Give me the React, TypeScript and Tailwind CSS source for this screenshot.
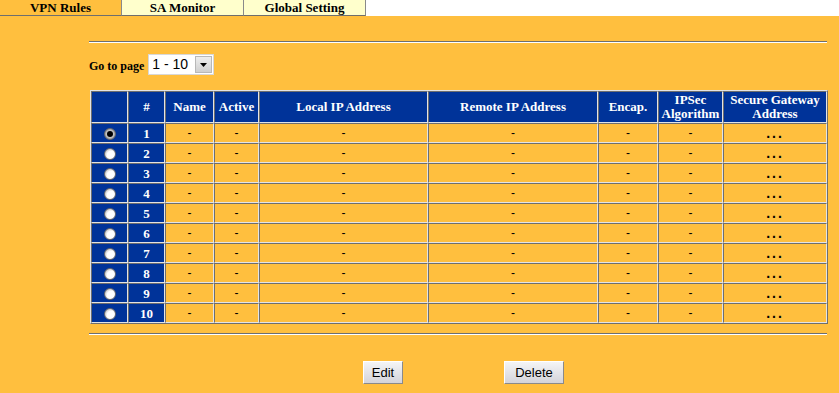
const tabs = [
  { label: "VPN Rules", active: true },
  { label: "SA Monitor", active: false },
  { label: "Global Setting", active: false },
];

const cols = [
  { key: "sel", label: "", w: 37 },
  { key: "num", label: "#", w: 37 },
  { key: "name", label: "Name", w: 49 },
  { key: "active", label: "Active", w: 45 },
  { key: "local", label: "Local IP Address", w: 169 },
  { key: "remote", label: "Remote IP Address", w: 170 },
  { key: "encap", label: "Encap.", w: 60 },
  { key: "ipsec", label: "IPSec Algorithm", w: 65 },
  { key: "gw", label: "Secure Gateway Address", w: 104 },
];

const rows = Array.from({ length: 10 }, (_, i) => i + 1);

function Radio({ checked }: { checked?: boolean }) {
  return (
    <span
      className={`inline-flex w-[12px] h-[12px] rounded-full items-center justify-center border border-[#6a6a6a] align-middle ${
        checked
          ? "bg-[radial-gradient(circle_at_50%_50%,#d0d0d0_40%,#7a7a7a_100%)]"
          : "bg-[radial-gradient(circle_at_60%_60%,#ffffff_45%,#9a9a9a_100%)]"
      }`}
    >
      {checked && <span className="w-[6px] h-[6px] rounded-full bg-black" />}
    </span>
  );
}

export default function App() {
  return (
    <div className="w-[839px] h-[393px] bg-[#ffbf3e] overflow-hidden font-['Liberation_Serif',serif] text-black">
      {/* tab strip */}
      <div className="flex h-[16px] bg-white">
        {tabs.map((t) => (
          <div
            key={t.label}
            className={`w-[122px] h-[16px] border-r border-[#8a8a8a] border-b border-b-[#6e6e6e] flex items-center justify-center text-[13px] font-bold leading-none ${
              t.active ? "bg-[#ffbf3e]" : "bg-[#ffffcc]"
            }`}
          >
            {t.label}
          </div>
        ))}
      </div>

      <div className="pl-[89px] w-[827px]">
        <div className="mt-[25px] h-[2px] border-t border-[#6e6e6e] border-b border-b-white" />

        <div className="flex items-center gap-[4px] mt-[11px] h-[21px]">
          <span className="text-[12px] font-bold pt-[3px]">Go to page</span>
          <div className="w-[66px] h-[21px] bg-white border border-[#d8d8d8] flex items-stretch">
            <span className="flex-1 pl-[3px] text-[14px] leading-[19px] font-['Liberation_Sans',sans-serif]">1 - 10</span>
            <span className="w-[17px] m-[1px] bg-[linear-gradient(#eeeeee,#cfcfcf)] border border-[#b8b8b8] flex items-center justify-center">
              <svg width="7" height="4" viewBox="0 0 7 4">
                <path d="M0 0h7L3.5 4z" fill="#000" />
              </svg>
            </span>
          </div>
        </div>

        <table className="mt-[15px] ml-[1px] w-[737px] table-fixed border-separate border-spacing-0 border border-t-[#e4e4e4] border-l-[#e4e4e4] border-r-[#6e6e6e] border-b-[#6e6e6e]">
          <colgroup>
            {cols.map((c) => (
              <col key={c.key} style={{ width: c.w }} />
            ))}
          </colgroup>
          <thead>
            <tr className="h-[32px]">
              {cols.map((c) => (
                <th
                  key={c.key}
                  className="bg-[#003399] text-white text-[13px] font-bold leading-[14px] text-center px-0 border border-t-[#6e6e6e] border-l-[#6e6e6e] border-r-[#e4e4e4] border-b-[#e4e4e4]"
                >
                  {c.label}
                </th>
              ))}
            </tr>
          </thead>
          <tbody>
            {rows.map((n) => (
              <tr key={n} className="h-[20px]">
                <td className="bg-[#003399] text-center border border-t-[#6e6e6e] border-l-[#6e6e6e] border-r-[#e4e4e4] border-b-[#e4e4e4] leading-none">
                  <Radio checked={n === 1} />
                </td>
                <td className="bg-[#003399] text-white text-[13px] font-bold text-center border border-t-[#6e6e6e] border-l-[#6e6e6e] border-r-[#e4e4e4] border-b-[#e4e4e4] leading-none">
                  {n}
                </td>
                {["name", "active", "local", "remote", "encap", "ipsec"].map((k) => (
                  <td
                    key={k}
                    className="text-center text-[12px] font-['Liberation_Sans',sans-serif] border border-t-[#6e6e6e] border-l-[#6e6e6e] border-r-[#e4e4e4] border-b-[#e4e4e4] leading-none"
                  >
                    -
                  </td>
                ))}
                <td className="text-center text-[14px] font-bold tracking-[2px] font-['Liberation_Sans',sans-serif] border border-t-[#6e6e6e] border-l-[#6e6e6e] border-r-[#e4e4e4] border-b-[#e4e4e4] leading-none">
                  ...
                </td>
              </tr>
            ))}
          </tbody>
        </table>

        <div className="mt-[9px] h-[2px] border-t border-[#6e6e6e] border-b border-b-white" />

        <div className="flex ml-[274px] gap-[101px] mt-[26px]">
          <button className="w-[40px] h-[23px] text-[13px] font-['Liberation_Sans',sans-serif] bg-[linear-gradient(#f4f4f6,#d4d4da)] border border-t-white border-l-white border-r-[#8a8a8a] border-b-[#8a8a8a]">
            Edit
          </button>
          <button className="w-[60px] h-[23px] text-[13px] font-['Liberation_Sans',sans-serif] bg-[linear-gradient(#f4f4f6,#d4d4da)] border border-t-white border-l-white border-r-[#8a8a8a] border-b-[#8a8a8a]">
            Delete
          </button>
        </div>
      </div>
    </div>
  );
}
